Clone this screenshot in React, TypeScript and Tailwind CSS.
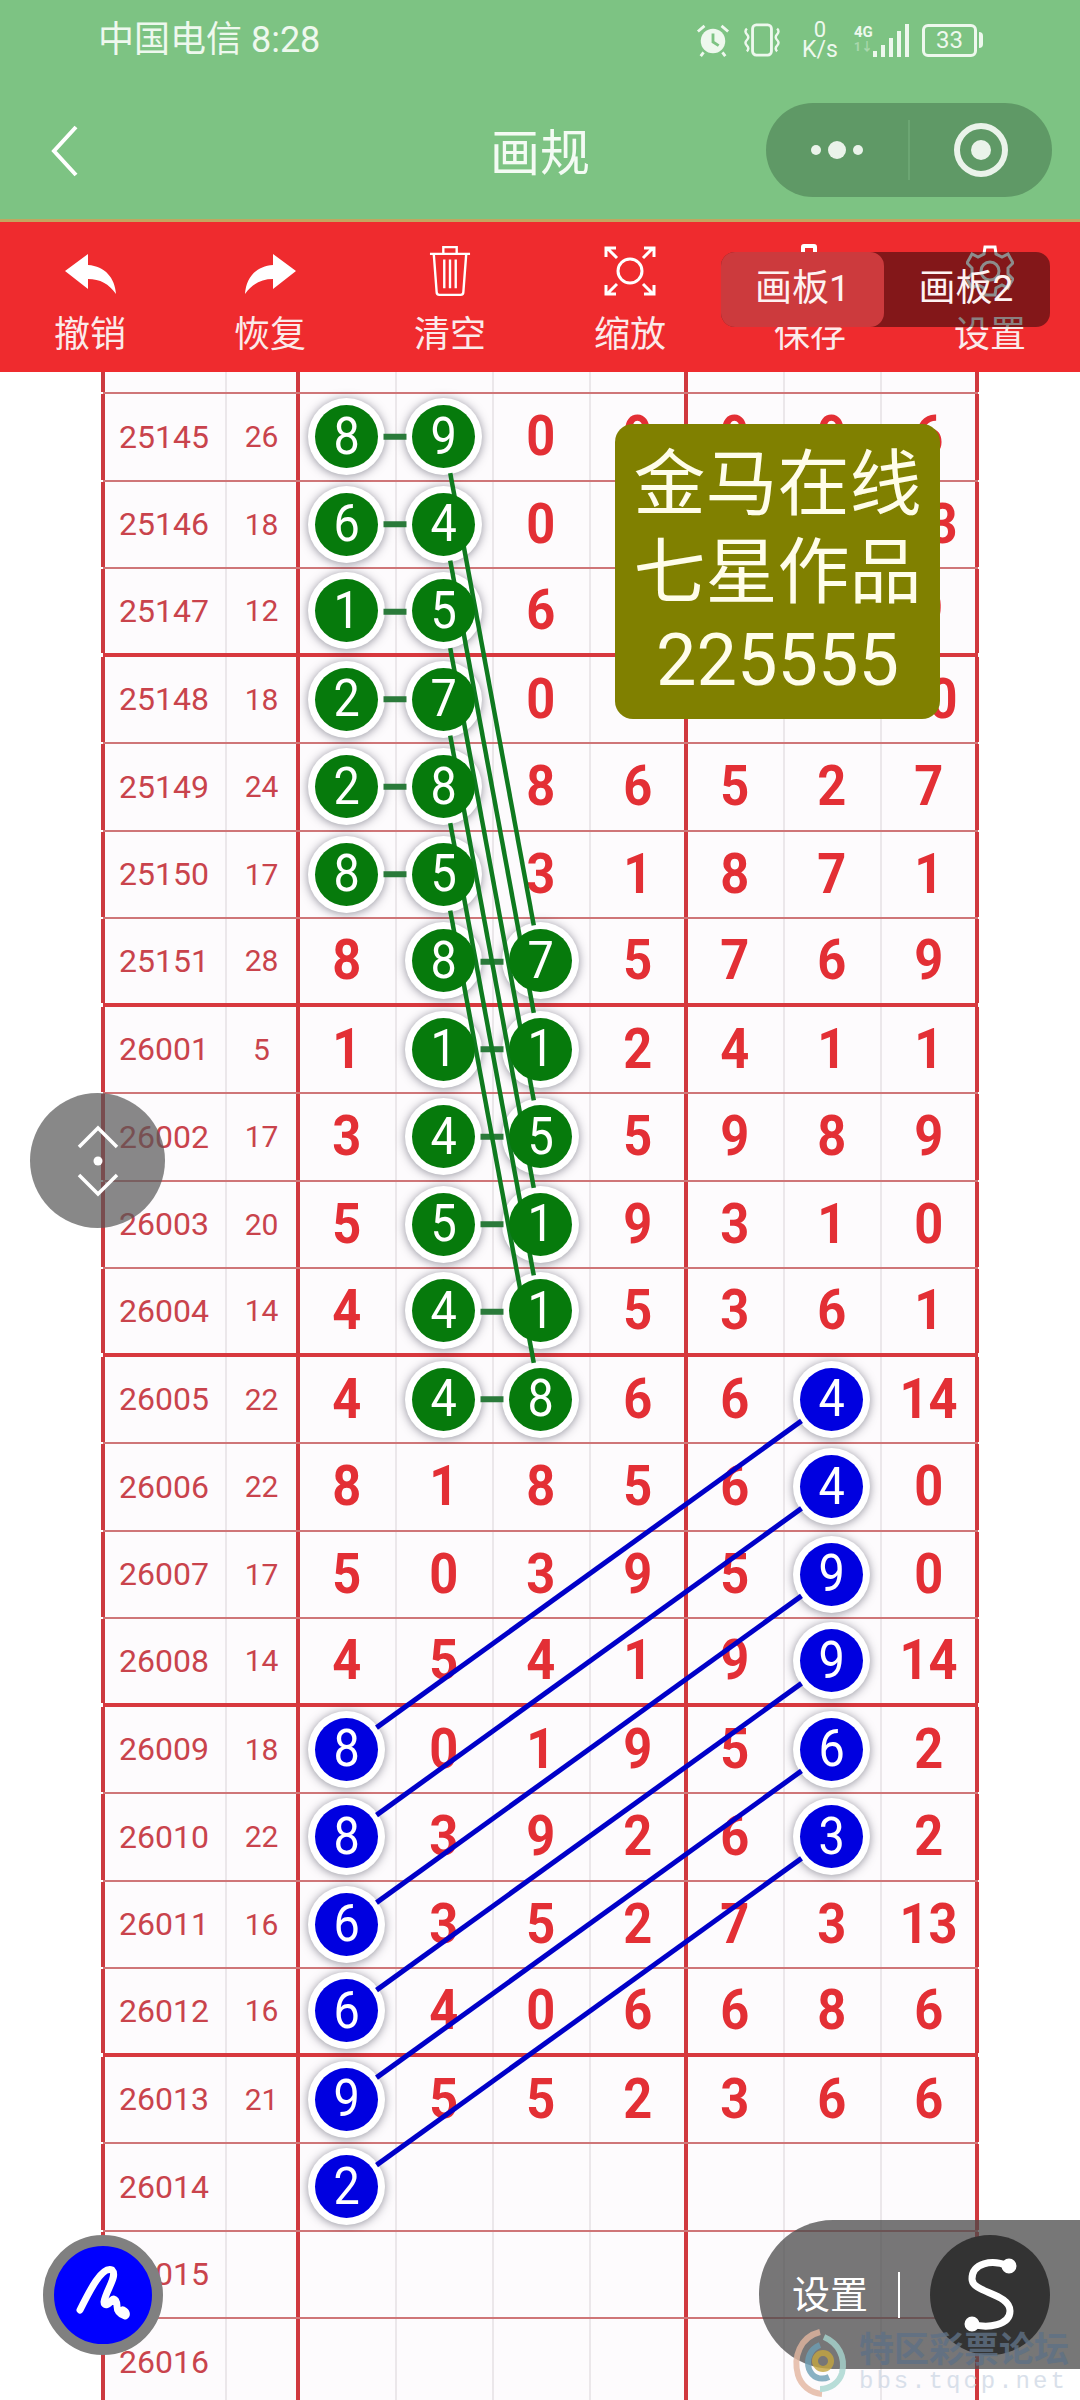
import React from 'react';

type Row = { id: string; sum: string; cells: string[] };

const rows: Row[] = [
  { id: '25145', sum: '26', cells: ['8', '9', '0', '9', '9', '9', '6'] },
  { id: '25146', sum: '18', cells: ['6', '4', '0', '6', '8', '2', '13'] },
  { id: '25147', sum: '12', cells: ['1', '5', '6', '2', '4', '1', '9'] },
  { id: '25148', sum: '18', cells: ['2', '7', '0', '3', '5', '6', '10'] },
  { id: '25149', sum: '24', cells: ['2', '8', '8', '6', '5', '2', '7'] },
  { id: '25150', sum: '17', cells: ['8', '5', '3', '1', '8', '7', '1'] },
  { id: '25151', sum: '28', cells: ['8', '8', '7', '5', '7', '6', '9'] },
  { id: '26001', sum: '5', cells: ['1', '1', '1', '2', '4', '1', '1'] },
  { id: '26002', sum: '17', cells: ['3', '4', '5', '5', '9', '8', '9'] },
  { id: '26003', sum: '20', cells: ['5', '5', '1', '9', '3', '1', '0'] },
  { id: '26004', sum: '14', cells: ['4', '4', '1', '5', '3', '6', '1'] },
  { id: '26005', sum: '22', cells: ['4', '4', '8', '6', '6', '4', '14'] },
  { id: '26006', sum: '22', cells: ['8', '1', '8', '5', '6', '4', '0'] },
  { id: '26007', sum: '17', cells: ['5', '0', '3', '9', '5', '9', '0'] },
  { id: '26008', sum: '14', cells: ['4', '5', '4', '1', '9', '9', '14'] },
  { id: '26009', sum: '18', cells: ['8', '0', '1', '9', '5', '6', '2'] },
  { id: '26010', sum: '22', cells: ['8', '3', '9', '2', '6', '3', '2'] },
  { id: '26011', sum: '16', cells: ['6', '3', '5', '2', '7', '3', '13'] },
  { id: '26012', sum: '16', cells: ['6', '4', '0', '6', '6', '8', '6'] },
  { id: '26013', sum: '21', cells: ['9', '5', '5', '2', '3', '6', '6'] },
  { id: '26014', sum: '', cells: ['2', '', '', '', '', '', ''] },
  { id: '26015', sum: '', cells: ['', '', '', '', '', '', ''] },
  { id: '26016', sum: '', cells: ['', '', '', '', '', '', ''] },
];

const greenBalls: [number, number][] = [
  [0, 0], [0, 1], [1, 0], [1, 1], [2, 0], [2, 1], [3, 0], [3, 1], [4, 0], [4, 1], [5, 0], [5, 1],
  [6, 1], [6, 2], [7, 1], [7, 2], [8, 1], [8, 2], [9, 1], [9, 2], [10, 1], [10, 2], [11, 1], [11, 2],
];
const blueBalls: [number, number][] = [
  [11, 5], [12, 5], [13, 5], [14, 5], [15, 5], [16, 5],
  [15, 0], [16, 0], [17, 0], [18, 0], [19, 0], [20, 0],
];

const ballColor = (r: number, c: number) => {
  if (greenBalls.some(([a, b]) => a === r && b === c)) return 'green';
  if (blueBalls.some(([a, b]) => a === r && b === c)) return 'blue';
  return null;
};

// line ends stop at the ball's white ring
const cx = (c: number) => 298 + 97 * (c + 0.5);
const cy = (r: number) => 22 + 87.5 * (r + 0.5) - 1;
const trimmed = (r1: number, c1: number, r2: number, c2: number) => {
  const x1 = cx(c1), y1 = cy(r1), x2 = cx(c2), y2 = cy(r2);
  const len = Math.hypot(x2 - x1, y2 - y1);
  const ux = (x2 - x1) / len, uy = (y2 - y1) / len;
  return { x1: x1 + ux * 37, y1: y1 + uy * 37, x2: x2 - ux * 37, y2: y2 - uy * 37 };
};

const Ball: React.FC<{ value: string; color: string }> = ({ value, color }) => (
  <div className="w-[77px] h-[77px] shrink-0 rounded-full bg-white shadow-[0_1px_10px_rgba(40,40,60,0.5)] flex items-center justify-center">
    <div
      className={
        'relative z-20 w-[63px] h-[63px] rounded-full flex items-center justify-center text-white text-[52px] font-normal leading-none ' +
        (color === 'green' ? 'bg-[#067a0c]' : 'bg-[#0000e0]')
      }
    >
      <span className="inline-block scale-x-[0.9]">{value}</span>
    </div>
  </div>
);

const GridRow: React.FC<{ row?: Row; index: number }> = ({ row, index }) => {
  const thick = index === 2 || index === 6 || index === 10 || index === 14 || index === 18;
  return (
    <div
      className={
        'grid grid-cols-[122px_73px_repeat(7,97px)] w-[875px] ml-[103px] box-border ' +
        (row
          ? 'h-[87.5px] ' + (thick ? 'border-b-4 border-[#d8383e]' : 'border-b-2 border-[#cf7678]')
          : 'h-[22px] border-b-2 border-[#cf7678]')
      }
    >
      <div className="flex items-center justify-center bg-[#fdfbfd] shadow-[-2px_0_0_#cc3a40,inset_2px_0_0_#cc3a40] text-[32px] text-[#c9434c]">
        {row?.id}
      </div>
      <div className="flex items-center justify-center bg-[#fdfbfd] shadow-[inset_2px_0_0_#ebe7ea] text-[30px] text-[#c9434c]">
        {row?.sum}
      </div>
      {Array.from({ length: 7 }).map((_, c) => {
        const value = row?.cells[c] ?? '';
        const color = row ? ballColor(index, c) : null;
        const edge =
          c === 0 || c === 4
            ? 'shadow-[-2px_0_0_#d0383e,inset_2px_0_0_#d0383e]'
            : c === 6
              ? 'shadow-[inset_2px_0_0_#ebe7ea,2px_0_0_#d0383e,inset_-2px_0_0_#d0383e]'
              : 'shadow-[inset_2px_0_0_#ebe7ea]';
        return (
          <div key={c} className={'flex items-center justify-center bg-[#fdfbfd] ' + edge}>
            {color ? (
              <Ball value={value} color={color} />
            ) : (
              <span className="inline-block scale-x-[0.92] text-[55px] font-bold text-[#e32f35] leading-none">{value}</span>
            )}
          </div>
        );
      })}
    </div>
  );
};

const StatusIcons = () => (
  <div className="flex items-center text-[#eef8ee] mr-[97px]">
    <svg width="34" height="34" viewBox="0 0 36 36" fill="none">
      <circle cx="18" cy="19" r="13" fill="#eef8ee" />
      <path d="M18 11v9l6 4" stroke="#7dc383" strokeWidth="3" />
      <path d="M2 9l7-6M34 9l-7-6M8 31l-3 4M28 31l3 4" stroke="#eef8ee" strokeWidth="3" />
    </svg>
    <svg width="40" height="34" viewBox="0 0 42 36" fill="none" stroke="#eef8ee" strokeWidth="3" className="ml-[12px]">
      <rect x="11" y="2" width="20" height="32" rx="4" />
      <path d="M5 6q-3 3 0 6t0 6q-3 3 0 6t0 6M37 6q3 3 0 6t0 6q3 3 0 6t0 6" strokeWidth="2.5" />
    </svg>
    <div className="flex flex-col items-center text-[23px] leading-[22px] w-[38px] ml-[19px]">
      <span className="text-[22px] leading-[19px]">0</span>
      <span>K/s</span>
    </div>
    <div className="flex items-end ml-[15px] h-[34px]">
      <div className="flex flex-col text-[15px] leading-[15px] font-bold mr-[1px] w-[18px]">
        <span>4G</span>
        <span className="opacity-40 text-[12px] mb-[2px]">1↓</span>
      </div>
      <div className="flex items-end gap-[4px]">
        <div className="w-[4px] h-[6px] bg-[#eef8ee]" />
        <div className="w-[4px] h-[12px] bg-[#eef8ee]" />
        <div className="w-[4px] h-[19px] bg-[#eef8ee]" />
        <div className="w-[4px] h-[26px] bg-[#eef8ee]" />
        <div className="w-[4px] h-[33px] bg-[#eef8ee]" />
      </div>
    </div>
    <div className="flex items-center ml-[13px]">
      <div className="w-[55px] h-[33px] rounded-[6px] border-[3px] border-[#eef8ee] flex items-center justify-center text-[24px] leading-none">
        33
      </div>
      <div className="w-[4px] h-[16px] bg-[#eef8ee] ml-[2px] rounded-r" />
    </div>
  </div>
);

const toolLabels = ['撤销', '恢复', '清空', '缩放', '保存', '设置'];

const ToolIcon: React.FC<{ index: number }> = ({ index }) => {
  if (index === 0 || index === 1) {
    return (
      <svg width="51" height="40" viewBox="0 0 51 40" className={index === 1 ? '-scale-x-100 mt-[6px]' : 'mt-[6px]'}>
        <path d="M0 17L23 0v11c17 1 27 13 28 29-7-10-16-15-28-15v10z" fill="#fff" />
      </svg>
    );
  }
  if (index === 2) {
    return (
      <svg width="42" height="54" viewBox="0 0 44 54" fill="none" stroke="#fff" strokeWidth="2.5">
        <path d="M1 9h42M15 9V2h14v7M5 9l3 40q0 3 3 3h22q3 0 3-3l3-40M16 15v30M22 15v30M28 15v30" />
      </svg>
    );
  }
  if (index === 3) {
    return (
      <svg width="52" height="52" viewBox="0 0 52 52" fill="none" stroke="#fff" strokeWidth="3">
        <circle cx="26" cy="26" r="12" />
        <path d="M2 12V3h10M3 3l10 10M40 3h10v9M49 3L39 13M2 40v9h10M3 49l10-10M40 49h10v-9M49 49L39 39" />
      </svg>
    );
  }
  if (index === 4) {
    return (
      <svg width="48" height="54" viewBox="0 0 48 54" fill="none" stroke="#fff" strokeWidth="4">
        <path d="M17 8V3q0-1 1-1h10q1 0 1 1v5" />
      </svg>
    );
  }
  return (
    <svg width="48" height="54" viewBox="0 0 48 54" fill="none" stroke="#fff" strokeWidth="3">
      <circle cx="24" cy="27" r="9" />
      <path d="M19 3h10l1 7 6 3 6-3 5 9-5 5v6l5 5-5 9-6-3-6 3-1 7H19l-1-7-6-3-6 3-5-9 5-5v-6l-5-5 5-9 6 3 6-3z" />
    </svg>
  );
};

export default function App() {
  return (
    <div className="relative w-[1080px] h-[2400px] overflow-hidden bg-white font-['Roboto','Noto_Sans_CJK_SC',sans-serif]">
      <div className="h-[219px] bg-[#7dc383] flex flex-col">
        <div className="h-[80px] flex items-center justify-between pl-[98px] pr-0 text-[#eef8ee] text-[36px]">
          <span className="whitespace-nowrap">中国电信 8:28</span>
          <StatusIcons />
        </div>
        <div className="relative flex-1 flex items-start">
          <svg width="30" height="52" viewBox="0 0 30 52" fill="none" className="ml-[50px] mt-[45px]">
            <path d="M26 2L4 26l22 24" stroke="#fff" strokeWidth="4" />
          </svg>
          <div className="absolute left-0 right-0 top-[46px] text-center text-[50px] leading-[56px] text-[#f4fbf4]">画规</div>
          <div className="absolute left-[766px] top-[23px] w-[286px] h-[94px] rounded-full bg-[#5f9966] flex items-center">
            <div className="w-[142px] flex items-center justify-center gap-[7px]">
              <div className="w-[10px] h-[10px] rounded-full bg-[#eaf3ea]" />
              <div className="w-[18px] h-[18px] rounded-full bg-[#eaf3ea]" />
              <div className="w-[10px] h-[10px] rounded-full bg-[#eaf3ea]" />
            </div>
            <div className="w-[2px] h-[60px] bg-[#6ca673]" />
            <div className="flex-1 flex items-center justify-center">
              <div className="w-[54px] h-[54px] rounded-full border-[6px] border-[#eaf3ea] flex items-center justify-center">
                <div className="w-[20px] h-[20px] rounded-full bg-[#eaf3ea]" />
              </div>
            </div>
          </div>
        </div>
      </div>

      <div className="relative h-[153px] bg-[#ef2b2e] border-t-[3px] border-[#c3a65f] flex">
        {toolLabels.map((label, i) => (
          <div key={label} className="w-[180px] flex flex-col items-center">
            <div className="h-[56px] mt-[21px] flex items-center justify-center">
              <ToolIcon index={i} />
            </div>
            <span className="mt-[15px] text-[36px] leading-[42px] text-[#fbeaea]">{label}</span>
          </div>
        ))}
        <div className="absolute left-[721px] top-[30px] w-[329px] h-[75px] rounded-[14px] bg-black/45 flex">
          <div className="w-[163px] h-full rounded-[14px] bg-[#cc3a3d] flex items-center justify-center text-[37px] text-[#fdf2f2] pb-[2px]">
            画板1
          </div>
          <div className="flex-1 flex items-center justify-center text-[37px] text-[#fdf2f2] pr-[2px] pb-[2px]">画板2</div>
        </div>
      </div>

      <div className="relative">
        <GridRow index={-1} />
        {rows.map((row, i) => (
          <GridRow key={row.id} row={row} index={i} />
        ))}

        <svg width="1080" height="2028" className="absolute left-0 top-0 z-10 pointer-events-none">
          {greenBalls
            .filter((_, i) => i % 2 === 0)
            .map(([r, c]) => {
              const l = trimmed(r, c, r, c + 1);
              return <line key={'h' + r} {...l} stroke="#2a7a3a" strokeWidth="6" />;
            })}
          {[0, 1, 2, 3, 4, 5].map((r) => {
            const l = trimmed(r, 1, r + 6, 2);
            return <line key={'g' + r} {...l} stroke="#0f7a1f" strokeWidth="4.5" />;
          })}
          {[11, 12, 13, 14, 15, 16].map((r) => {
            const l = trimmed(r, 5, r + 4, 0);
            return <line key={'b' + r} {...l} stroke="#0000c8" strokeWidth="5" />;
          })}
        </svg>
      </div>

      <div className="absolute z-30 left-[615px] top-[424px] w-[325px] h-[295px] rounded-[18px] bg-[#808000] flex flex-col items-center justify-center text-[72px] leading-[88px] text-[#fffdea] pt-[2px]">
        <span>金马在线</span>
        <span>七星作品</span>
        <span>225555</span>
      </div>

      <div className="absolute z-30 left-[30px] top-[1093px] w-[135px] h-[135px] rounded-full bg-[#555555]/70 flex flex-col items-center justify-center">
        <svg width="44" height="72" viewBox="0 0 44 72" fill="none" stroke="#fff" strokeWidth="3.5">
          <path d="M3 22L22 3l19 19M3 50l19 19 19-19" />
          <circle cx="22" cy="36" r="4.5" fill="#fff" stroke="none" />
        </svg>
      </div>

      <div className="absolute z-30 left-[43px] top-[2235px] w-[120px] h-[120px] rounded-full bg-[#0000ff] border-[11px] border-[#808080] flex items-center justify-center">
        <svg width="98" height="98" viewBox="0 0 98 98" fill="none">
          <path
            d="M26 64C36 44 48 20 58 24 64 30 52 44 50 56c0 4 4 4 8-2 3-3 5 2 5 6 0 4 2 8 8 10 2-1 2-4-2-6"
            stroke="#fff"
            strokeWidth="7"
            strokeLinecap="round"
            strokeLinejoin="round"
          />
        </svg>
      </div>

      <div className="absolute z-30 left-[759px] top-[2220px] w-[330px] h-[149px] rounded-l-[74px] bg-[#4a4a4a]/75 flex items-center">
        <span className="ml-[33px] text-[38px] text-white leading-none whitespace-nowrap">设置</span>
        <div className="ml-[30px] w-[2px] h-[46px] bg-white" />
        <div className="ml-[30px] w-[120px] h-[120px] rounded-full bg-[#333333] flex items-center justify-center">
          <svg width="120" height="120" viewBox="0 0 120 120" fill="none" stroke="#fff" strokeWidth="7" strokeLinecap="round">
            <path d="M78 31C62 24 42 28 42 44c0 14 38 14 38 32 0 14-22 18-38 13" />
            <circle cx="79" cy="31" r="4" fill="#fff" />
            <circle cx="42" cy="89" r="4" fill="#fff" />
          </svg>
        </div>
      </div>

      <div className="absolute z-40 left-[790px] top-[2328px] w-[290px] h-[70px] flex items-center opacity-80">
        <svg width="64" height="68" viewBox="0 0 64 68" fill="none" strokeWidth="6">
          <path d="M30 3C10 8 3 28 8 46c3 10 12 18 24 19" stroke="#e3b6a0" />
          <path d="M34 8c14 6 22 20 18 36-3 10-12 16-22 16" stroke="#a7d6cf" />
          <path d="M30 16c-10 4-14 14-11 24 3 8 11 12 20 8" stroke="#6d9fb5" />
          <circle cx="33" cy="32" r="8" stroke="#c5a640" />
        </svg>
        <div className="ml-[5px] flex flex-col items-start">
          <span className="text-[35px] leading-[38px] font-bold text-[#5f7185] whitespace-nowrap">特区彩票论坛</span>
          <span className="text-[24px] leading-[24px] tracking-[3px] text-[#d0d9e6] font-['Liberation_Mono',monospace]">bbs.tqcp.net</span>
        </div>
      </div>
    </div>
  );
}
